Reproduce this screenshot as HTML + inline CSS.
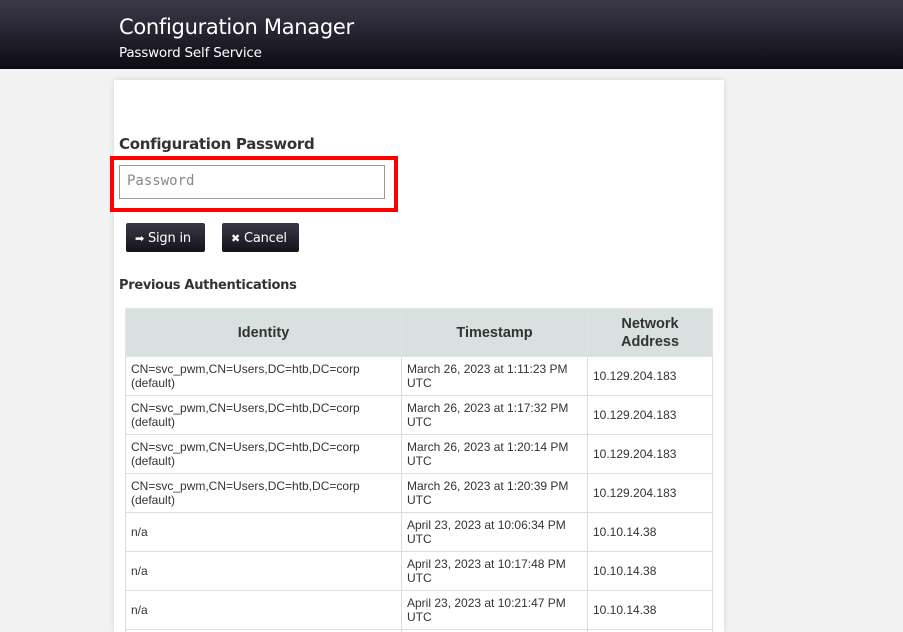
<!DOCTYPE html>
<html style="overflow:hidden;height:632px"><head><style>
body{margin:0;background:#f2f2f2;font-family:"DejaVu Sans","Liberation Sans",sans-serif;overflow:hidden;width:903px;height:632px;position:relative}
.hdr{height:69px;background:linear-gradient(#3c3a48,#0c0b14);color:#fff;position:relative}
.t1{position:absolute;left:119px;top:15px;font-size:21px;letter-spacing:-0.3px}
.t2{position:absolute;left:119px;top:45px;font-size:13.5px;letter-spacing:-0.2px}
.card{position:absolute;left:114px;top:80px;width:610px;height:552px;background:#fff;box-shadow:0 0 6px rgba(0,0,0,.12)}
.lbl{position:absolute;left:5px;top:55px;font-size:15px;font-weight:bold;color:#333;letter-spacing:-0.3px}
.red{position:absolute;left:-4px;top:76px;width:288px;height:56px;border:4px solid #f00;box-sizing:border-box}
.inp{position:absolute;left:5px;top:85px;width:266px;height:34px;border:1px solid #999;box-sizing:border-box;font-family:"DejaVu Sans Mono",monospace;font-size:14px;color:#888;padding:7px 7px}
.btn{position:absolute;top:143px;height:29px;background:linear-gradient(#3a3845,#15141c);color:#fff;font-size:13px;border-radius:2px;line-height:31px;box-sizing:border-box;padding-left:9px;letter-spacing:-0.2px}
.pa{position:absolute;left:5px;top:198px;font-size:13px;font-weight:bold;color:#333;letter-spacing:-0.3px}
table{position:absolute;left:11px;top:228px;border-collapse:collapse;font-family:"Liberation Sans",sans-serif;font-size:12px;color:#333;width:588px;table-layout:fixed}
th{background:#d8e1df;font-size:14.5px;height:47px;padding:0 5px;border:1px solid #e3e3e3;line-height:18px}
td{border:1px solid #ddd;height:38px;padding:0 5px;line-height:14px}
</style></head><body>
<div class="hdr"><div class="t1">Configuration Manager</div><div class="t2">Password Self Service</div></div>
<div class="card">
<div class="lbl">Configuration Password</div>
<div class="red"></div>
<div class="inp">Password</div>
<div class="btn" style="left:12px;width:79px"><span style="font-size:11px">➡</span> Sign in</div>
<div class="btn" style="left:108px;width:77px"><span style="font-size:11px">✖</span> Cancel</div>
<div class="pa">Previous Authentications</div>
<table>
<colgroup><col style="width:276px"><col style="width:186px"><col></colgroup>
<tr><th>Identity</th><th>Timestamp</th><th>Network<br>Address</th></tr>
<tr><td>CN=svc_pwm,CN=Users,DC=htb,DC=corp<br>(default)</td><td>March 26, 2023 at 1:11:23 PM<br>UTC</td><td>10.129.204.183</td></tr>
<tr><td>CN=svc_pwm,CN=Users,DC=htb,DC=corp<br>(default)</td><td>March 26, 2023 at 1:17:32 PM<br>UTC</td><td>10.129.204.183</td></tr>
<tr><td>CN=svc_pwm,CN=Users,DC=htb,DC=corp<br>(default)</td><td>March 26, 2023 at 1:20:14 PM<br>UTC</td><td>10.129.204.183</td></tr>
<tr><td>CN=svc_pwm,CN=Users,DC=htb,DC=corp<br>(default)</td><td>March 26, 2023 at 1:20:39 PM<br>UTC</td><td>10.129.204.183</td></tr>
<tr><td>n/a</td><td>April 23, 2023 at 10:06:34 PM<br>UTC</td><td>10.10.14.38</td></tr>
<tr><td>n/a</td><td>April 23, 2023 at 10:17:48 PM<br>UTC</td><td>10.10.14.38</td></tr>
<tr><td>n/a</td><td>April 23, 2023 at 10:21:47 PM<br>UTC</td><td>10.10.14.38</td></tr>
<tr><td>n/a</td><td>April 23, 2023<br>UTC</td><td>10.10.14.38</td></tr>
</table>
</div>
</body></html>
